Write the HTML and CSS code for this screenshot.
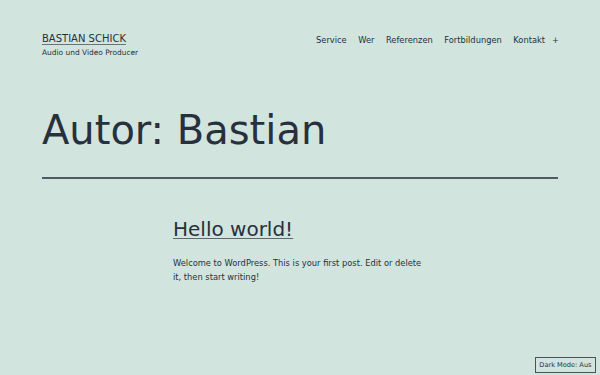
FILE: index.html
```html
<!DOCTYPE html>
<html lang="de">
<head>
<meta charset="utf-8">
<title>Bastian – Bastian Schick</title>
<link rel="stylesheet" href="styles.css">
</head>
<body>
<div class="site">
  <header class="site-header">
    <div class="branding">
      <a class="site-title" href="#">BASTIAN SCHICK</a>
      <p class="tagline">Audio und Video Producer</p>
    </div>
    <nav class="menu">
      <a href="#">Service</a>
      <a href="#">Wer</a>
      <a href="#">Referenzen</a>
      <a href="#">Fortbildungen</a>
      <a href="#">Kontakt</a>
      <button class="sub-toggle" type="button">+</button>
    </nav>
  </header>
  <div class="page-header">
    <h1 class="page-title">Autor: Bastian</h1>
  </div>
  <article class="entry">
    <h2 class="entry-title"><a href="#">Hello world!</a></h2>
    <p class="entry-content">Welcome to WordPress. This is your first post. Edit or delete it, then start writing!</p>
  </article>
</div>
<button class="dark-toggle" type="button">Dark Mode: Aus</button>
</body>
</html>
```
FILE: styles.css
```css
html, body {
  margin: 0;
  padding: 0;
  background: #d1e4dd;
  color: #28303d;
  font-family: "DejaVu Sans", sans-serif;
}
.site {
  padding: 0 42px;
}
a {
  color: #28303d;
}
.site-header {
  display: flex;
  justify-content: space-between;
  align-items: flex-start;
  padding-top: 32.2px;
}
.branding {
  display: flex;
  flex-direction: column;
}
.site-title {
  font-size: 10px;
  line-height: 13px;
  text-decoration: underline;
  text-decoration-thickness: 1px;
  text-underline-offset: 1.5px;
  text-decoration-color: #6b7378;
}
.tagline {
  margin: 2.8px 0 0;
  font-size: 7.45px;
  line-height: 10px;
}
.menu {
  display: flex;
  align-items: center;
  gap: 11.5px;
  margin-top: 1.7px;
  margin-right: -1px;
  font-size: 8.3px;
  line-height: 12px;
}
.menu a {
  text-decoration: none;
}
.sub-toggle {
  margin-left: -4.5px;
  padding: 0;
  border: 0;
  background: none;
  color: #28303d;
  font-family: "DejaVu Sans", sans-serif;
  font-size: 8.3px;
  line-height: 12px;
}
.page-header {
  margin-top: 48.2px;
  padding-bottom: 22.5px;
  border-bottom: 2px solid #4f5a62;
}
.page-title {
  margin: 0;
  font-size: 40px;
  line-height: 48px;
  font-weight: normal;
}
.entry {
  max-width: 254px;
  margin: 37.1px auto 0;
}
.entry-title {
  margin: 0;
  font-size: 20px;
  line-height: 26px;
  font-weight: normal;
}
.entry-title a {
  text-decoration: underline;
  text-decoration-thickness: 1px;
  text-underline-offset: 2px;
  text-decoration-color: #5f686e;
}
.entry-content {
  margin: 14.4px 0 0;
  font-size: 8.3px;
  line-height: 14px;
}
.dark-toggle {
  position: fixed;
  right: 4px;
  bottom: 2px;
  padding: 3px 3.5px;
  border: 1px solid #4a535a;
  background: #d1e4dd;
  color: #28303d;
  font-family: "DejaVu Sans", sans-serif;
  font-size: 6.6px;
  line-height: 8px;
}
```
